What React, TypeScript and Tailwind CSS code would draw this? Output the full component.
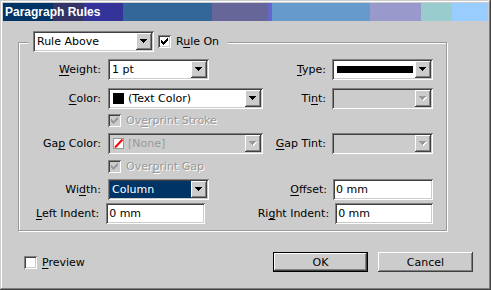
import React from "react";

const sunken =
  "shadow-[inset_1px_1px_#808080,inset_-1px_-1px_#ffffff,inset_2px_2px_#404040,inset_-2px_-2px_#cccccc]";
const raised = "shadow-[inset_-1px_-1px_#404040,inset_1px_1px_#ffffff,inset_-2px_-2px_#808080]";

// title bar colour strips, left to right
const strips = [
  "w-[50px] bg-[#003366]",
  "w-[30px] bg-[#333366]",
  "w-[40px] bg-[#333399]",
  "w-[89px] bg-[#336699]",
  "w-[56px] bg-[#666699]",
  "w-[4px] bg-[#6666cc]",
  "w-[98px] bg-[#6699cc]",
  "w-[51px] bg-[#9999cc]",
  "w-[31px] bg-[#99cccc]",
  "flex-1 bg-[#99ccff]",
];

function Key({ text, k, dim }: { text: string; k: number; dim?: boolean }) {
  return (
    <span className={`whitespace-nowrap ${dim ? "text-[#999999] [text-shadow:1px_1px_0_#ffffff]" : "text-black"}`}>
      {text.slice(0, k)}
      <span className="underline underline-offset-[2px]">{text[k]}</span>
      {text.slice(k + 1)}
    </span>
  );
}

function Arrow({ dim }: { dim?: boolean }) {
  const d = "M0 0h7v1H0zM1 1h5v1H1zM2 2h3v1H2zM3 3h1v1H3z";
  return (
    <svg width="8" height="5" viewBox="0 0 8 5" shapeRendering="crispEdges">
      {dim && <path d={d} fill="#ffffff" transform="translate(1 1)" />}
      <path d={d} fill={dim ? "#999999" : "#000000"} />
    </svg>
  );
}

function Tick({ color }: { color: string }) {
  return (
    <svg width="7" height="7" viewBox="0 0 7 7" shapeRendering="crispEdges">
      <path
        d="M0 2h1v3H0zM1 3h1v3H1zM2 4h1v3H2zM3 3h1v3H3zM4 2h1v3H4zM5 1h1v3H5zM6 0h1v3H6z"
        fill={color}
      />
    </svg>
  );
}

function Check({ on, dim }: { on?: boolean; dim?: boolean }) {
  return (
    <div className={`w-[13px] h-[13px] shrink-0 flex items-center justify-center ${sunken} ${dim ? "bg-[#cccccc]" : "bg-white"}`}>
      {on && <Tick color={dim ? "#999999" : "#000000"} />}
    </div>
  );
}

function Combo({ w, dim, hi, children }: { w: string; dim?: boolean; hi?: boolean; children?: React.ReactNode }) {
  return (
    <div className={`${w} h-[21px] p-[2px] flex ${sunken} ${dim ? "bg-[#cccccc]" : "bg-white"}`}>
      <div className={`flex-1 min-w-0 flex items-center pl-[2px] whitespace-nowrap overflow-hidden ${hi ? "bg-[#003366] text-white" : ""}`}>
        {children}
      </div>
      <div className={`w-[16px] h-[17px] bg-[#cccccc] flex items-center justify-center ${raised}`}>
        <Arrow dim={dim} />
      </div>
    </div>
  );
}

function Field({ w, value }: { w: string; value: string }) {
  return (
    <div className={`${w} h-[21px] p-[2px] pl-[3px] flex items-center bg-white ${sunken}`}>{value}</div>
  );
}

function Row({ top, children }: { top: string; children: React.ReactNode }) {
  return <div className={`flex items-center h-[21px] ${top}`}>{children}</div>;
}

function LeftLabel({ text, k }: { text: string; k: number }) {
  return (
    <div className="w-[82px] flex justify-end">
      <Key text={text} k={k} />
    </div>
  );
}

function RightLabel({ text, k }: { text: string; k: number }) {
  return (
    <div className="flex-1 flex justify-end mr-[6px]">
      <Key text={text} k={k} />
    </div>
  );
}

export default function App() {
  return (
    <div className="w-[491px] h-[290px] p-[3px] bg-[#cccccc] text-[11px] leading-none text-black font-['DejaVu_Sans',sans-serif] shadow-[inset_-1px_-1px_#404040,inset_1px_1px_#cccccc,inset_-2px_-2px_#808080,inset_2px_2px_#ffffff]">
      {/* title bar */}
      <div className="relative h-[18px] flex">
        {strips.map((s, i) => (
          <div key={i} className={s} />
        ))}
        <div className="absolute inset-0 pl-[2px] flex items-center text-white font-bold text-[12px] font-['Liberation_Sans',sans-serif]">
          Paragraph Rules
        </div>
      </div>

      {/* group */}
      <div className="relative mt-[21px] ml-[15px] w-[429px] h-[189px] border border-[#999999] shadow-[inset_1px_1px_#ffffff,1px_1px_#ffffff] pt-[16px] pr-[13px]">
        <div className="absolute top-[-12px] left-[9px] w-[200px] h-[21px] pl-[5px] flex items-center bg-[#cccccc]">
          <Combo w="w-[121px]">Rule Above</Combo>
          <div className="ml-[4px]">
            <Check on />
          </div>
          <div className="ml-[5px]">
            <Key text="Rule On" k={1} />
          </div>
        </div>

        <Row top="">
          <LeftLabel text="Weight:" k={0} />
          <div className="ml-[7px] w-[155px]">
            <Combo w="w-[101px]">1 pt</Combo>
          </div>
          <RightLabel text="Type:" k={0} />
          <Combo w="w-[101px]">
            <div className="flex-1 h-[7px] bg-black ml-[1px] mr-[2px]" />
          </Combo>
        </Row>

        <Row top="mt-[8px]">
          <LeftLabel text="Color:" k={0} />
          <div className="ml-[7px] w-[155px]">
            <Combo w="w-[155px]">
              <div className="w-[11px] h-[11px] bg-black ml-[1px] mr-[4px]" />
              (Text Color)
            </Combo>
          </div>
          <RightLabel text="Tint:" k={2} />
          <Combo w="w-[101px]" dim />
        </Row>

        <div className="flex items-center h-[13px] mt-[5px] pl-[89px]">
          <Check on dim />
          <div className="ml-[5px]">
            <Key text="Overprint Stroke" k={2} dim />
          </div>
        </div>

        <Row top="mt-[6px]">
          <LeftLabel text="Gap Color:" k={2} />
          <div className="ml-[7px] w-[155px]">
            <Combo w="w-[155px]" dim>
              <svg width="11" height="11" viewBox="0 0 11 11" className="ml-[1px] mr-[4px]">
                <rect x="0.5" y="0.5" width="10" height="10" fill="#ffffff" stroke="#999999" />
                <line x1="2" y1="9.5" x2="9.5" y2="1.5" stroke="#ff0000" strokeWidth="2" />
              </svg>
              <span className="text-[#999999]">[None]</span>
            </Combo>
          </div>
          <RightLabel text="Gap Tint:" k={0} />
          <Combo w="w-[101px]" dim />
        </Row>

        <div className="flex items-center h-[13px] mt-[6px] pl-[89px]">
          <Check on dim />
          <div className="ml-[5px]">
            <Key text="Overprint Gap" k={4} dim />
          </div>
        </div>

        <Row top="mt-[6px]">
          <LeftLabel text="Width:" k={2} />
          <div className="ml-[7px] w-[155px]">
            <Combo w="w-[101px]" hi>
              Column
            </Combo>
          </div>
          <RightLabel text="Offset:" k={0} />
          <Field w="w-[100px]" value="0 mm" />
        </Row>

        <Row top="mt-[3px]">
          <LeftLabel text="Left Indent:" k={0} />
          <div className="ml-[7px] w-[155px]">
            <Field w="w-[99px]" value="0 mm" />
          </div>
          <RightLabel text="Right Indent:" k={2} />
          <Field w="w-[100px]" value="0 mm" />
        </Row>
      </div>

      {/* footer */}
      <div className="flex items-center h-[20px] mt-[21px] pl-[21px] pr-[15px]">
        <Check />
        <div className="ml-[5px]">
          <Key text="Preview" k={0} />
        </div>
        <div className="ml-auto w-[95px] h-[20px] border border-black">
          <div className={`w-full h-full flex items-center justify-center ${raised}`}>OK</div>
        </div>
        <div className={`ml-[10px] w-[95px] h-[20px] flex items-center justify-center ${raised}`}>Cancel</div>
      </div>
    </div>
  );
}
